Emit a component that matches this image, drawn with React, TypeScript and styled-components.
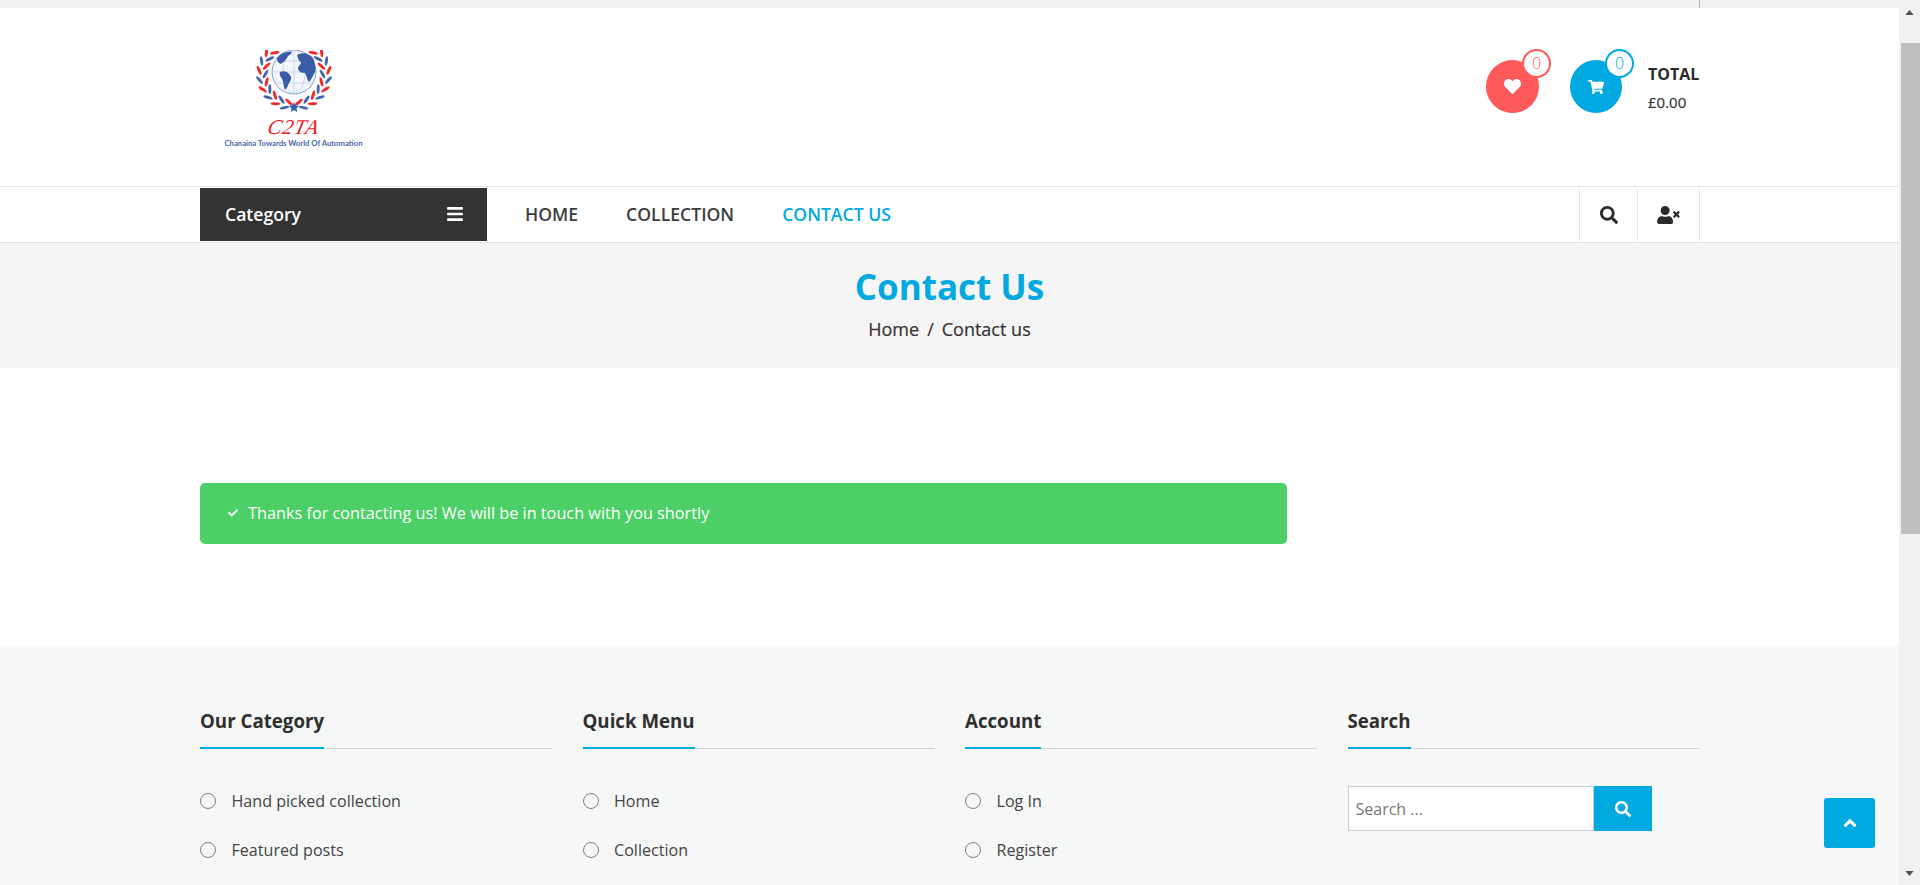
import React from "react";
import styled, { createGlobalStyle } from "styled-components";
import { FaHeart, FaShoppingCart, FaSearch, FaUserTimes, FaBars, FaCheck, FaAngleUp } from "react-icons/fa";

const Global = createGlobalStyle`
  html, body { margin: 0; padding: 0; height: 885px; overflow: hidden; background: #fff; }
  body { font-family: "Open Sans", "Liberation Sans", sans-serif; color: #333; }
  * { box-sizing: border-box; }
`;
const Shell = styled.div`display: flex; height: 885px; overflow: hidden; position: relative;`;
const Page = styled.div`flex: 1; min-width: 0; display: flex; flex-direction: column; height: 885px; overflow: hidden;`;
const TopStrip = styled.div`height: 8px; flex: none; background: #f0f0f0; padding-left: 1699px;`;
const TopDivider = styled.div`width: 1px; height: 8px; background: #b5b5b5;`;
const Container = styled.div`width: 1500px; margin-left: 200px;`;
const Header = styled.header`height: 179px; flex: none; background: #fff; border-bottom: 1px solid #e5e5e5;`;
const HeaderInner = styled(Container)`display: flex; justify-content: space-between; height: 100%;`;
const LogoBox = styled.div`margin: 42px 0 0 23px; width: 141px; height: 106px; display: flex; flex-direction: column; align-items: center;`;
const LogoArt = styled.svg`flex: none; filter: blur(0.35px);`;
const LogoName = styled.div`font-family: "Liberation Serif", serif; font-style: italic; font-size: 21px; line-height: 18px; color: #ee1c25; margin-top: 6px; letter-spacing: 1px; transform: skewX(-12deg);`;
const LogoTag = styled.div`font-family: "Lato", sans-serif; font-size: 7.7px; line-height: 10px; color: #4a67ad; white-space: nowrap; margin-top: 2px; font-weight: 700;`;
const Tools = styled.div`display: flex; align-items: flex-start; padding-top: 52px;`;
const Round = styled.div<{ $c: string; $w: number; $size: number }>`
  width: ${p => p.$w}px; height: 53px; border-radius: 50%; background: ${p => p.$c};
  color: #fff; display: flex; align-items: center; justify-content: center; position: relative; font-size: ${p => p.$size}px;
`;
const Badge = styled.span<{ $c: string }>`
  position: absolute; top: -11px; right: -12px; width: 29px; height: 29px; border-radius: 50%;
  background: #fff; border: 2px solid ${p => p.$c}; color: ${p => p.$c};
  font-size: 16px; line-height: 24px; text-align: center; font-weight: 300;
`;
const Cart = styled.div`margin-left: 31px;`;
const Totals = styled.div`margin-left: 26px; width: 52px; padding-top: 5px;`;
const TotalLabel = styled.div`font-size: 16px; font-weight: 700; line-height: 19px; color: #2b2b2b; white-space: nowrap;`;
const TotalValue = styled.div`font-size: 15px; font-weight: 400; line-height: 19px; color: #333; margin-top: 9px; -webkit-text-stroke: .2px #333;`;
const Nav = styled.nav`height: 56px; flex: none; background: #fff; border-bottom: 1px solid #e5e5e5;`;
const NavInner = styled(Container)`display: flex; height: 55px; padding-top: 1px;`;
const CatBar = styled.div`width: 287px; height: 53px; background: #333; color: #fff; display: flex; justify-content: space-between; align-items: center; padding: 0 24px 2px 25px; font-size: 17.6px; font-weight: 600;`;
const NavLinks = styled.ul`list-style: none; margin: 0 0 0 38px; padding: 0 0 2px; display: flex; gap: 48px; flex: 1; align-items: center; height: 53px;`;
const NavLink = styled.li<{ $on?: boolean }>`font-size: 17.6px; font-weight: 600; color: ${p => (p.$on ? "#00a9e0" : "#3d3d3d")}; white-space: nowrap;`;
const IconCell = styled.div<{ $w: number }>`width: ${p => p.$w}px; height: 53px; border-left: 1px solid #e5e5e5; display: flex; align-items: center; justify-content: center; font-size: 18px; color: #2b2b2b; &:last-child { border-right: 1px solid #e5e5e5; }`;
const UserIcon = styled(FaUserTimes)`width: 23px; height: 18px;`;
const CatIcon = styled(FaBars)`width: 16px; height: 18px;`;
const TitleBand = styled.section`height: 125px; flex: none; background: #f5f5f5; display: flex; flex-direction: column; align-items: center; padding-top: 21px;`;
const Title = styled.h1`margin: 0; font-size: 35px; line-height: 46px; font-weight: 700; color: #00a9e0;`;
const Crumbs = styled.div`display: flex; gap: 8px; font-size: 18px; font-weight: 400; line-height: 24px; color: #333; margin-top: 7px; -webkit-text-stroke: .2px #333;`;
const Main = styled.main`height: 278px; flex: none; background: #fff; padding: 115px 0 0 200px;`;
const Alert = styled.div`width: 1087px; height: 61px; background: #4bcf66; border-radius: 5px; color: #fff; display: flex; align-items: center; padding: 0 0 2px 28px; font-size: 16.25px; gap: 10px;`;
const Footer = styled.footer`flex: 1; background: #f6f7f7; padding-top: 62px;`;
const FooterGrid = styled(Container)`display: grid; grid-template-columns: repeat(4, 352px); column-gap: 30.5px;`;
const ColHead = styled.div`border-bottom: 1px solid #d4d4d4; height: 41px; margin-bottom: 37px;`;
const ColTitle = styled.span`display: inline-block; height: 41px; font-size: 18.7px; font-weight: 700; line-height: 26px; color: #2f2f2f; border-bottom: 2px solid #00a9e0;`;
const Links = styled.ul`list-style: none; margin: 0; padding: 4px 0 0; display: flex; flex-direction: column; gap: 27px;`;
const LinkItem = styled.li`display: flex; align-items: center; gap: 15.5px; font-size: 16.1px; line-height: 22px; color: #444;`;
const Ring = styled.span`width: 16px; height: 16px; border: 1px solid #808080; border-radius: 50%; flex: none; margin-top: -1px;`;
const SearchForm = styled.div`display: flex; width: 304.5px; height: 45px;`;
const SearchInput = styled.div`flex: 1; border: 1px solid #ccc; background: #fff; font-size: 16px; line-height: 45px; padding-left: 7px; color: #777;`;
const SearchBtn = styled.div`width: 58px; background: #00a9e0; color: #fff; display: flex; align-items: center; justify-content: center; font-size: 16px;`;
const ToTop = styled.div`position: absolute; left: 1824px; top: 798px; width: 51px; height: 50px; background: #00a9e0; border-radius: 3px; color: #fff; display: flex; align-items: center; justify-content: center; font-size: 20px;`;
const Scrollbar = styled.div`width: 21px; flex: none; background: #f1f1f1; display: flex; flex-direction: column; align-items: center; height: 885px;`;
const ScrollArrow = styled.div`height: 24px; flex: none; display: flex; align-items: center; justify-content: center; width: 100%;`;
const Thumb = styled.div`width: 19px; height: 491px; margin: 19px 0 0 2px; background: #bfbfbf; flex: none;`;
const Spacer = styled.div`flex: 1;`;

const PAIRS = Array.from({ length: 9 }, (_, i) => -54 + i * 16);

const Leaf = ({ side, deg, r, turn, fill }: { side: number; deg: number; r: number; turn: number; fill: string }) => {
  const a = (deg * Math.PI) / 180;
  const x = 40 + side * Math.cos(a) * r;
  const y = 24 + Math.sin(a) * r;
  const rot = side * (deg + turn);
  return <ellipse cx={x} cy={y} rx="4.8" ry="1.5" fill={fill} transform={`rotate(${rot} ${x} ${y})`} />;
};

const Logo = () => (
  <LogoArt width="80" height="62" viewBox="0 0 80 62" aria-hidden>
    {[-1, 1].map(side =>
      PAIRS.map((deg, i) => (
        <g key={`${side}-${i}`}>
          <Leaf side={side} deg={deg} r={35} turn={-60} fill={i % 2 ? "#ee2a2a" : "#4467ae"} />
          <Leaf side={side} deg={deg + 6} r={28.5} turn={-120} fill={i % 2 ? "#4467ae" : "#ee2a2a"} />
        </g>
      ))
    )}
    <circle cx="40" cy="22" r="22" fill="#f3f6fc" stroke="#7f9bd3" strokeWidth="1" />
    <g stroke="#b9c8e6" strokeWidth=".7" fill="none">
      <ellipse cx="40" cy="22" rx="11" ry="21.5" />
      <path d="M40 0v44M18 22h44M21 11h38M21 33h38" />
    </g>
    <path d="M23 8c4-5 10-7 15-6-1 3-4 3-5 6-2 3-4 4-6 6-2-1-4-2-4-6zM26 22c4-2 8 0 10 3 2 3 1 5-1 8-1 3-2 5-4 7-2-4-1-8-3-11-1-2-3-4-2-7z" fill="#3a5ca8" />
    <path d="M43 5c5-3 12-2 16 3 2 4 3 9 2 14-2 4-4 8-6 10-2-2-2-6-4-9-3 0-6-1-7-4 0-3 3-4 3-7-2 0-3-4-4-7z" fill="#3a5ca8" />
    <path d="M40 52l1.6 3.4 3.7.4-2.8 2.4.8 3.7-3.3-1.9-3.3 1.9.8-3.7-2.8-2.4 3.7-.4z" fill="#2a62b0" />
  </LogoArt>
);

const columns = [
  { title: "Our Category", links: ["Hand picked collection", "Featured posts"] },
  { title: "Quick Menu", links: ["Home", "Collection"] },
  { title: "Account", links: ["Log In", "Register"] },
];

export default function App() {
  return (
    <Shell>
      <Global />
      <Page>
        <TopStrip><TopDivider /></TopStrip>
        <Header>
          <HeaderInner>
            <LogoBox>
              <Logo />
              <LogoName>C2TA</LogoName>
              <LogoTag>Chanaina Towards World Of Automation</LogoTag>
            </LogoBox>
            <Tools>
              <Round $c="#ff5a5a" $w={53} $size={17}><FaHeart /><Badge $c="#ff5a5a">0</Badge></Round>
              <Cart><Round $c="#00a9e0" $w={52} $size={16}><FaShoppingCart /><Badge $c="#00a9e0">0</Badge></Round></Cart>
              <Totals>
                <TotalLabel>TOTAL</TotalLabel>
                <TotalValue>£0.00</TotalValue>
              </Totals>
            </Tools>
          </HeaderInner>
        </Header>
        <Nav>
          <NavInner>
            <CatBar>Category<CatIcon /></CatBar>
            <NavLinks>
              <NavLink>HOME</NavLink>
              <NavLink>COLLECTION</NavLink>
              <NavLink $on>CONTACT US</NavLink>
            </NavLinks>
            <IconCell $w={58}><FaSearch /></IconCell>
            <IconCell $w={63}><UserIcon /></IconCell>
          </NavInner>
        </Nav>
        <TitleBand>
          <Title>Contact Us</Title>
          <Crumbs><span>Home</span><span>/</span><span>Contact us</span></Crumbs>
        </TitleBand>
        <Main>
          <Alert><FaCheck size={10} />Thanks for contacting us! We will be in touch with you shortly</Alert>
        </Main>
        <Footer>
          <FooterGrid>
            {columns.map(c => (
              <div key={c.title}>
                <ColHead><ColTitle>{c.title}</ColTitle></ColHead>
                <Links>
                  {c.links.map(l => <LinkItem key={l}><Ring />{l}</LinkItem>)}
                </Links>
              </div>
            ))}
            <div>
              <ColHead><ColTitle>Search</ColTitle></ColHead>
              <SearchForm>
                <SearchInput>Search ...</SearchInput>
                <SearchBtn><FaSearch /></SearchBtn>
              </SearchForm>
            </div>
          </FooterGrid>
        </Footer>
      </Page>
      <ToTop><FaAngleUp /></ToTop>
      <Scrollbar>
        <ScrollArrow><svg width="9" height="5" viewBox="0 0 10 6"><path d="M0 6 5 0l5 6z" fill="#505050" /></svg></ScrollArrow>
        <Thumb />
        <Spacer />
        <ScrollArrow><svg width="9" height="5" viewBox="0 0 10 6"><path d="M0 0l5 6 5-6z" fill="#505050" /></svg></ScrollArrow>
      </Scrollbar>
    </Shell>
  );
}
